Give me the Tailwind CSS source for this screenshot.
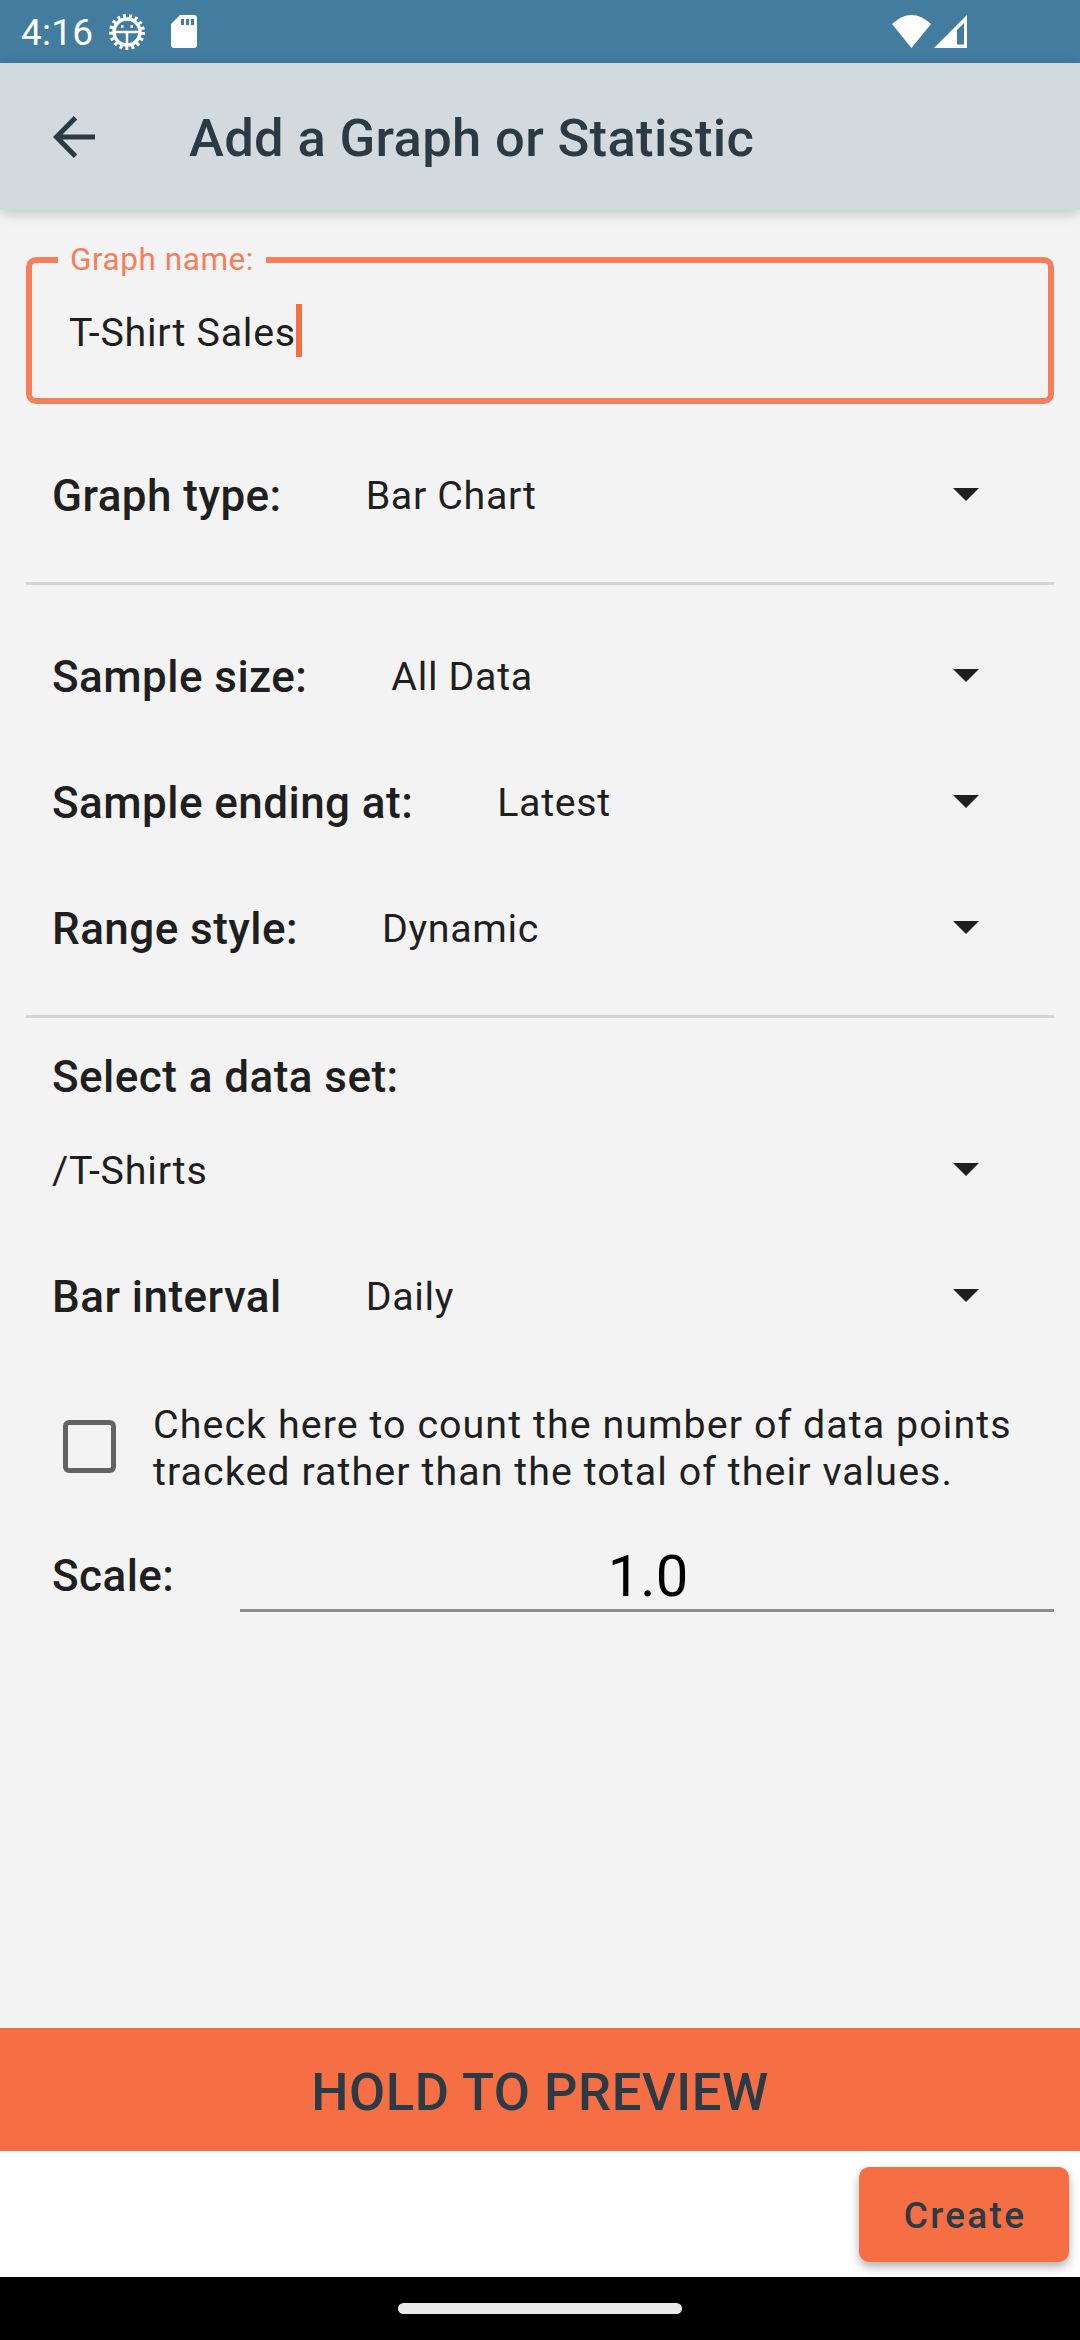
<!DOCTYPE html>
<html lang="en"><head><meta charset="utf-8"><title>Add a Graph or Statistic</title>
<script src="https://cdn.jsdelivr.net/npm/@tailwindcss/browser@4"></script></head>
<body class="w-[1080px] h-[2340px] overflow-hidden bg-[#f3f3f3] flex flex-col font-['Roboto',sans-serif] text-[#1f1f1f]">
<!-- Status bar -->
<header class="h-[63px] shrink-0 bg-[#427c9f] flex items-center text-white pl-[21px] text-[37px]">
<span class="pt-[3px] tracking-[0.2px]">4:16</span>
<svg class="ml-[15px] w-[38px] h-[38px]" viewBox="0 0 38 38" fill="none" stroke="white"><circle cx="19" cy="19" r="13" stroke-width="3.500"/><circle cx="19" cy="19" r="16" stroke-width="4" stroke-dasharray="2.900 3.014"/><path d="M6 19h26M19 19v14" stroke-width="2.500"/><path d="M13 13.500h2.500M22.500 13.500h2.500" stroke-width="2.500"/></svg>
<svg class="ml-[25px] w-[26px] h-[33px]" viewBox="0 0 26 33"><path fill="white" d="M9 0H23a3 3 0 0 1 3 3V30a3 3 0 0 1-3 3H3a3 3 0 0 1-3-3V9Z"/><path stroke="#427c9f" stroke-width="3" d="M11.500 4v6M16.500 4v6M21.500 4v6"/></svg>
<svg class="ml-auto -mt-[1px] w-[39px] h-[33px]" viewBox="0 0 39 33"><path fill="white" d="M0 9Q19.500-9 39 9L19.500 33Z"/></svg>
<svg class="ml-[3px] mr-[113px] -mt-[1px] w-[33px] h-[33px]" viewBox="0 0 33 33"><path fill="white" fill-rule="evenodd" d="M33 0V33H0ZM30 8L23 15V29.500H30Z"/></svg>
</header>
<!-- App bar -->
<div class="h-[147px] shrink-0 bg-[#d2dadd] flex items-center pl-[53px] text-[#2b3b45] shadow-[0_4px_12px_rgba(0,0,0,0.18)]">
<svg class="w-[42px] h-[42px]" viewBox="0 0 42 42" fill="none" stroke="currentColor" stroke-width="5"><path d="M42 21H4M22.500 1.800L3.500 21L22.500 40.200"/></svg>
<h1 class="ml-[94px] pt-[4px] text-[52.5px] tracking-[0.35px] font-medium">Add a Graph or Statistic</h1>
</div>
<!-- Form -->
<main class="flex-1 flex flex-col px-[26px]">
<fieldset class="mt-[27px] h-[167px] shrink-0 border-[6px] border-[#f67f5b] rounded-[10px] pl-[26px] pt-0 min-w-0">
<legend class="px-[12px] text-[31.5px] leading-[46px] tracking-[0.55px] text-[#f67f5b] whitespace-nowrap">Graph name:</legend>
<div class="flex items-start pl-[11px] mt-[21px] text-[39.4px] tracking-[0.75px] leading-[53px]"><span class="pt-[2px]">T-Shirt Sales</span><i class="w-[6px] h-[53px] bg-[#f67043]"></i></div>
</fieldset>
<div class="h-[126px] mt-[28px] shrink-0 flex items-center pl-[26px] pr-[75px]"><b class="pt-[2px] text-[44px] tracking-[0.45px] font-medium">Graph type:</b><span class="pt-[2px] ml-[84px] text-[39.4px] tracking-[0.65px]">Bar Chart</span><svg class="ml-auto -mt-[1px] w-[26px] h-[13px]" viewBox="0 0 26 13"><path fill="#1f1f1f" d="M0 0H26L13 13Z"/></svg></div>
<hr class="mt-[24px] h-[3px] shrink-0 border-0 bg-[#d4d4d4]">
<div class="h-[126px] mt-[28px] shrink-0 flex items-center pl-[26px] pr-[75px]"><b class="pt-[2px] text-[44px] tracking-[0.45px] font-medium">Sample size:</b><span class="pt-[2px] ml-[84px] text-[39.4px] tracking-[0.65px]">All Data</span><svg class="ml-auto -mt-[2px] w-[26px] h-[13px]" viewBox="0 0 26 13"><path fill="#1f1f1f" d="M0 0H26L13 13Z"/></svg></div>
<div class="h-[126px] shrink-0 flex items-center pl-[26px] pr-[75px]"><b class="pt-[2px] text-[44px] tracking-[0.45px] font-medium">Sample ending at:</b><span class="pt-[2px] ml-[84px] text-[39.4px] tracking-[0.65px]">Latest</span><svg class="ml-auto -mt-[2px] w-[26px] h-[13px]" viewBox="0 0 26 13"><path fill="#1f1f1f" d="M0 0H26L13 13Z"/></svg></div>
<div class="h-[126px] shrink-0 flex items-center pl-[26px] pr-[75px]"><b class="pt-[2px] text-[44px] tracking-[0.45px] font-medium">Range style:</b><span class="pt-[2px] ml-[84px] text-[39.4px] tracking-[0.65px]">Dynamic</span><svg class="ml-auto -mt-[2px] w-[26px] h-[13px]" viewBox="0 0 26 13"><path fill="#1f1f1f" d="M0 0H26L13 13Z"/></svg></div>
<hr class="mt-[24px] h-[3px] shrink-0 border-0 bg-[#d4d4d4]">
<b class="mt-[28px] h-[61px] shrink-0 leading-[62px] pl-[26px] text-[44px] tracking-[0.45px] font-medium">Select a data set:</b>
<div class="h-[126px] shrink-0 flex items-center pl-[26px] pr-[75px]"><span class="pt-[2px] text-[39.4px] tracking-[0.8px]">/T-Shirts</span><svg class="ml-auto -mt-[2px] w-[26px] h-[13px]" viewBox="0 0 26 13"><path fill="#1f1f1f" d="M0 0H26L13 13Z"/></svg></div>
<div class="h-[126px] shrink-0 flex items-center pl-[26px] pr-[75px]"><b class="pt-[2px] text-[44px] tracking-[0.45px] font-medium">Bar interval</b><span class="pt-[2px] ml-[84px] text-[39.4px] tracking-[0.65px]">Daily</span><svg class="ml-auto -mt-[2px] w-[26px] h-[13px]" viewBox="0 0 26 13"><path fill="#1f1f1f" d="M0 0H26L13 13Z"/></svg></div>
<label class="mt-[41px] h-[93px] shrink-0 flex items-center pl-[37px]"><i class="w-[53px] h-[53px] border-[5px] border-[#636363] rounded-[6px]"></i><span class="ml-[37px] pt-[3px] text-[39.4px] leading-[47px] tracking-[1.06px] whitespace-nowrap">Check here to count the number of data points<br>tracked rather than the total of their values.</span></label>
<div class="mt-[34px] h-[85px] shrink-0 flex pl-[26px]"><b class="w-[188px] pt-[6px] text-[44px] tracking-[0.45px] font-medium leading-[86px]">Scale:</b><div class="flex-1 border-b-[3px] border-[#8d8d8d] text-center text-[58px] text-black leading-[60px] pt-[19px] pl-[2px]">1.0</div></div>
</main>
<!-- Actions -->
<div class="h-[123px] shrink-0 bg-[#f66e43] flex items-center justify-center text-[52.5px] tracking-[0.55px] font-medium text-[#2b3b45] pt-[5px]">HOLD TO PREVIEW</div>
<div class="h-[126px] shrink-0 bg-white flex items-center justify-end pr-[11px] pt-[1px]"><button class="w-[210px] h-[95px] rounded-[10px] bg-[#f66e43] text-[#2b3b45] text-[37px] font-medium tracking-[2.3px] pl-[2px] pt-[3px] shadow-[0_5px_10px_rgba(0,0,0,0.3)]">Create</button></div>
<nav class="relative h-[63px] shrink-0 bg-black flex items-center justify-center"><i class="w-[284px] h-[11px] rounded-full bg-[#ebebeb]"></i></nav>
</body></html>
